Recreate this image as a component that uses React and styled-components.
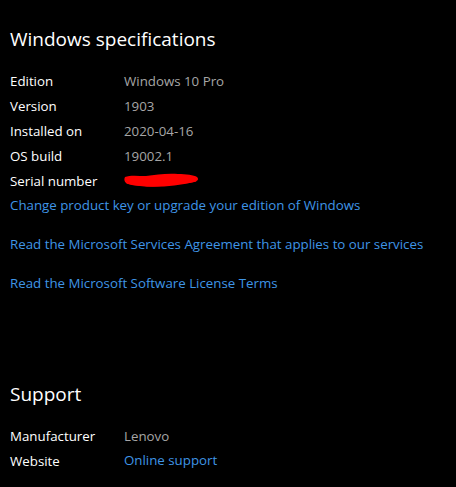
import React from "react";
import styled, { createGlobalStyle } from "styled-components";

const GlobalStyle = createGlobalStyle`
  html, body {
    margin: 0;
    background: #000;
  }
  body {
    font-family: "Open Sans", "Noto Sans", sans-serif;
  }
`;

const specs = [
  { label: "Edition", value: "Windows 10 Pro" },
  { label: "Version", value: "1903" },
  { label: "Installed on", value: "2020-04-16" },
  { label: "OS build", value: "19002.1" },
  { label: "Serial number", redacted: true }
];

const links = [
  "Change product key or upgrade your edition of Windows",
  "Read the Microsoft Services Agreement that applies to our services",
  "Read the Microsoft Software License Terms"
];

// red marker scribble hiding the serial number
const Redacted = () => (
  <svg width="76" height="18" viewBox="0 0 76 18">
    <path
      d="M1 5 C6 3 14 4 22 4 C32 3 42 1 54 2 C62 2 70 3 73 5 C75 7 74 9 70 10 C64 12 58 11 52 12 C42 14 30 15 20 14 C12 14 5 13 2 11 C0 9 0 7 1 5 Z"
      fill="#ff0000"
    />
    <path d="M3 10 C18 14 42 15 72 8" stroke="#ff0000" strokeWidth="3" fill="none" />
  </svg>
);

const App = () => (
  <Page>
    <GlobalStyle />
    <Heading>Windows specifications</Heading>
    <Table>
      {specs.map(s => (
        <Row key={s.label}>
          <Label>{s.label}</Label>
          {s.redacted ? (
            <Value>
              <Redacted />
            </Value>
          ) : (
            <Value>{s.value}</Value>
          )}
        </Row>
      ))}
    </Table>
    <Links>
      {links.map(l => (
        <Link key={l}>{l}</Link>
      ))}
    </Links>
    <Heading $top={84}>Support</Heading>
    <Table>
      <Row>
        <Label>Manufacturer</Label>
        <Value>Lenovo</Value>
      </Row>
      <Row>
        <Label>Website</Label>
        <Link as="span">Online support</Link>
      </Row>
    </Table>
  </Page>
);

const Page = styled.div`
  width: 456px;
  height: 487px;
  box-sizing: border-box;
  padding: 25px 10px 0;
  background: #000;
  overflow: hidden;
`;

const Heading = styled.h2`
  margin: ${p => p.$top || 0}px 0 15px;
  font-size: 19px;
  line-height: 28px;
  font-weight: 400;
  color: #fff;
`;

const Table = styled.div`
  display: flex;
  flex-direction: column;
`;

const Row = styled.div`
  display: grid;
  grid-template-columns: 114px auto;
  align-items: center;
  height: 25px;
`;

const Label = styled.span`
  font-size: 13.3px;
  color: #fff;
`;

const Value = styled.span`
  font-size: 13.3px;
  color: #a6a6a6;
  display: flex;
  align-items: center;
`;

const Links = styled.div`
  display: flex;
  flex-direction: column;
  gap: 14px;
`;

const Link = styled.a`
  display: block;
  font-size: 13.3px;
  line-height: 25px;
  color: #3f95e6;
  cursor: pointer;
`;

export default App;
